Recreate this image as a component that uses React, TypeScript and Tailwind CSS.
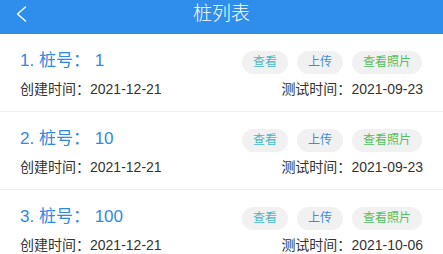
import React from "react";

const rows = [
  { n: 1, no: "1", created: "2021-12-21", tested: "2021-09-23" },
  { n: 2, no: "10", created: "2021-12-21", tested: "2021-09-23" },
  { n: 3, no: "100", created: "2021-12-21", tested: "2021-10-06" },
];

export default function App() {
  return (
    <div
      className="w-[443px] h-[254px] overflow-hidden bg-white"
      style={{ fontFamily: '"Liberation Sans", "Noto Sans CJK SC", sans-serif' }}
    >
      <div className="relative h-[34px] bg-[#2f8deb] flex items-center justify-center pb-[6px]">
        <svg
          className="absolute left-[15px] top-[6px]"
          width="13"
          height="16"
          viewBox="0 0 13 16"
          fill="none"
        >
          <path d="M10.5 1 L2.5 8 L10.5 15" stroke="white" strokeWidth="1.4" strokeLinecap="round" strokeLinejoin="round" />
        </svg>
        <span className="text-[19px] leading-[22px] text-white font-light">桩列表</span>
      </div>
      {rows.map((r) => (
        <div key={r.n} className="px-5 pt-[15px] pb-[12px] border-b border-[#f0f0f0]">
          <div className="flex items-center justify-between h-[24px]">
            <span className="text-[17px] leading-[24px] text-[#3089e4]">
              {r.n}. 桩号： {r.no}
            </span>
            <div className="flex items-center gap-[9px] pr-[1px] pt-[2px]">
              <span className="h-[23px] px-[11px] rounded-full bg-[#f1f1f1] text-[12px] leading-[23px] text-[#45b9c8]">
                查看
              </span>
              <span className="h-[23px] px-[11px] rounded-full bg-[#f1f1f1] text-[12px] leading-[23px] text-[#3a8de6]">
                上传
              </span>
              <span className="h-[23px] px-[11px] rounded-full bg-[#f1f1f1] text-[12px] leading-[23px] text-[#52c062]">
                查看照片
              </span>
            </div>
          </div>
          <div className="flex items-center justify-between mt-[6px] text-[14px] leading-[20px] text-[#333333]">
            <span>创建时间：{r.created}</span>
            <span>测试时间：{r.tested}</span>
          </div>
        </div>
      ))}
    </div>
  );
}
